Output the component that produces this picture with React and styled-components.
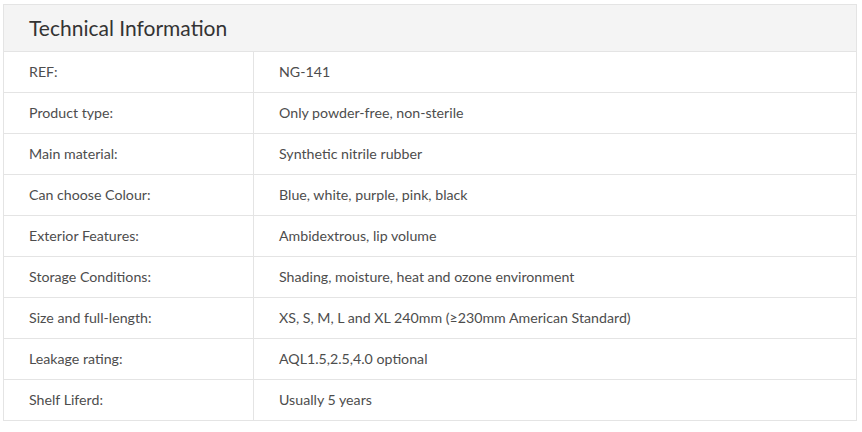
import React from "react";
import styled, { createGlobalStyle } from "styled-components";

const Global = createGlobalStyle`
  html, body { margin: 0; padding: 0; background: #ffffff; }
  body { font-family: Lato, "Open Sans", sans-serif; }
`;

const Page = styled.div`
  padding: 4px 5px 0 3px;
`;

const Table = styled.table`
  width: 854px;
  border-collapse: collapse;
  table-layout: fixed;
  border: 1px solid #e4e4e4;
`;

const LabelCol = styled.col`
  width: 250px;
`;

const HeadCell = styled.th`
  background: #f4f4f4;
  height: 44px;
  padding: 0 0 2px 25px;
  text-align: left;
  font-weight: 400;
  font-size: 21px;
  color: #333333;
  border-bottom: 1px solid #e4e4e4;
`;

const Row = styled.tr`
  & + & td { border-top: 1px solid #e4e4e4; }
`;

const Cell = styled.td`
  height: 38px;
  padding: 0 0 2px 25px;
  font-size: 14.2px;
  color: #4d4d4d;
  vertical-align: middle;
  border-left: ${(p) => (p.$value ? "1px solid #e4e4e4" : "none")};
`;

const rows = [
  ["REF:", "NG-141"],
  ["Product type:", "Only powder-free, non-sterile"],
  ["Main material:", "Synthetic nitrile rubber"],
  ["Can choose Colour:", "Blue, white, purple, pink, black"],
  ["Exterior Features:", "Ambidextrous, lip volume"],
  ["Storage Conditions:", "Shading, moisture, heat and ozone environment"],
  ["Size and full-length:", "XS, S, M, L and XL 240mm (≥230mm American Standard)"],
  ["Leakage rating:", "AQL1.5,2.5,4.0 optional"],
  ["Shelf Liferd:", "Usually 5 years"],
];

export default function App() {
  return (
    <>
      <Global />
      <Page>
        <Table>
          <colgroup>
            <LabelCol />
            <col />
          </colgroup>
          <thead>
            <tr>
              <HeadCell colSpan={2}>Technical Information</HeadCell>
            </tr>
          </thead>
          <tbody>
            {rows.map(([k, v]) => (
              <Row key={k}>
                <Cell>{k}</Cell>
                <Cell $value>{v}</Cell>
              </Row>
            ))}
          </tbody>
        </Table>
      </Page>
    </>
  );
}
